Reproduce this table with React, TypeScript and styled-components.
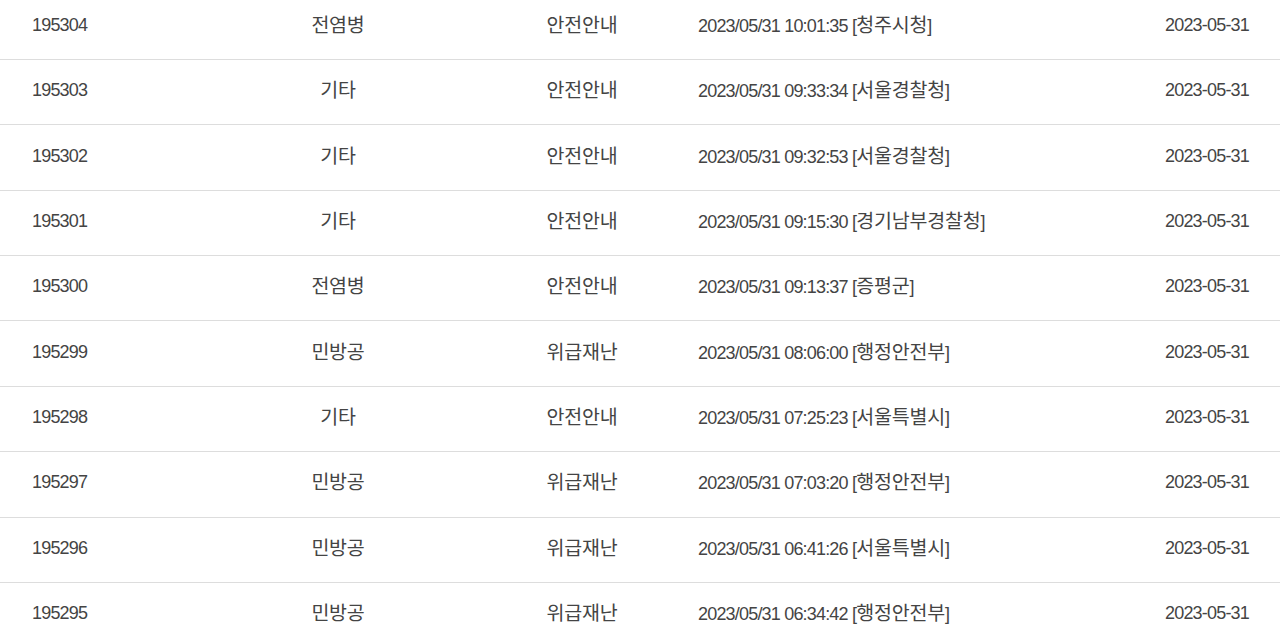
import { createGlobalStyle } from 'styled-components'
import styled from 'styled-components'

const GlobalStyle = createGlobalStyle`
  html, body {
    margin: 0;
    padding: 0;
    background: #fff;
    overflow: hidden;
  }
  body {
    font-family: "Liberation Sans", "Noto Sans CJK KR", sans-serif;
    color: #444;
  }
`

const StyledList = styled.ul`
  list-style: none;
  margin: -5.4px 0 0;
  padding: 0;
`

const StyledRow = styled.li`
  display: grid;
  grid-template-columns: 178px 256px 232px 1fr auto;
  align-items: center;
  box-sizing: border-box;
  height: 65.375px;
  padding: 0 31px 4px 32px;
  border-bottom: 1px solid #ddd;
  font-size: 18px;
  line-height: 22px;
`

const Cell = styled.span<{ $align?: 'left' | 'center' | 'right' }>`
  text-align: ${({ $align }) => $align || 'left'};
  white-space: nowrap;
  letter-spacing: -0.045em;
`

const Hangul = styled.span`
  font-family: "Noto Sans CJK KR", sans-serif;
  font-size: 19.5px;
  letter-spacing: -0.01em;
  line-height: 22px;
`

type Alert = {
  id: number
  category: string
  kind: string
  sentAt: string
  sender: string
  date: string
}

const alerts: Alert[] = [
  { id: 195304, category: '전염병', kind: '안전안내', sentAt: '2023/05/31 10:01:35', sender: '청주시청', date: '2023-05-31' },
  { id: 195303, category: '기타', kind: '안전안내', sentAt: '2023/05/31 09:33:34', sender: '서울경찰청', date: '2023-05-31' },
  { id: 195302, category: '기타', kind: '안전안내', sentAt: '2023/05/31 09:32:53', sender: '서울경찰청', date: '2023-05-31' },
  { id: 195301, category: '기타', kind: '안전안내', sentAt: '2023/05/31 09:15:30', sender: '경기남부경찰청', date: '2023-05-31' },
  { id: 195300, category: '전염병', kind: '안전안내', sentAt: '2023/05/31 09:13:37', sender: '증평군', date: '2023-05-31' },
  { id: 195299, category: '민방공', kind: '위급재난', sentAt: '2023/05/31 08:06:00', sender: '행정안전부', date: '2023-05-31' },
  { id: 195298, category: '기타', kind: '안전안내', sentAt: '2023/05/31 07:25:23', sender: '서울특별시', date: '2023-05-31' },
  { id: 195297, category: '민방공', kind: '위급재난', sentAt: '2023/05/31 07:03:20', sender: '행정안전부', date: '2023-05-31' },
  { id: 195296, category: '민방공', kind: '위급재난', sentAt: '2023/05/31 06:41:26', sender: '서울특별시', date: '2023-05-31' },
  { id: 195295, category: '민방공', kind: '위급재난', sentAt: '2023/05/31 06:34:42', sender: '행정안전부', date: '2023-05-31' },
]

const App = () => {
  return (
    <>
      <GlobalStyle />
      <StyledList>
        {alerts.map((a) => (
          <StyledRow key={a.id}>
            <Cell>{a.id}</Cell>
            <Cell $align="center"><Hangul>{a.category}</Hangul></Cell>
            <Cell $align="center"><Hangul>{a.kind}</Hangul></Cell>
            <Cell>
              {a.sentAt} [<Hangul>{a.sender}</Hangul>]
            </Cell>
            <Cell $align="right">{a.date}</Cell>
          </StyledRow>
        ))}
      </StyledList>
    </>
  )
}

export default App
